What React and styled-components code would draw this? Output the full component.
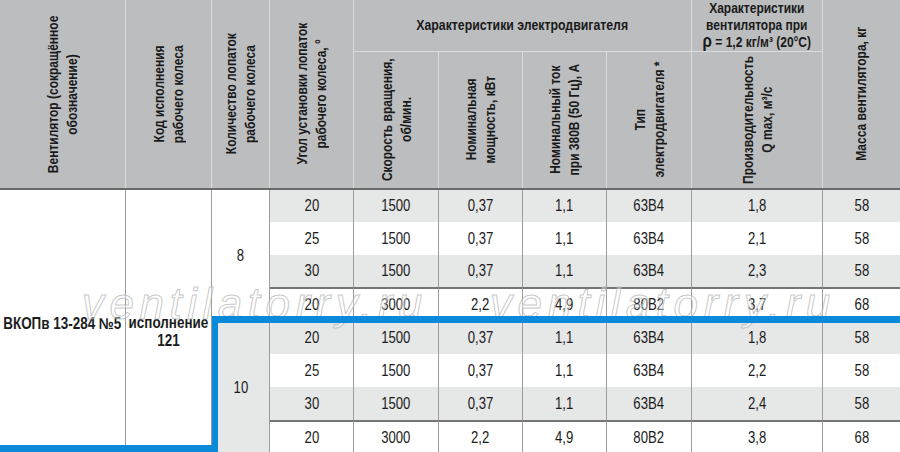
import React from "react";
import styled, { createGlobalStyle } from "styled-components";

const Global = createGlobalStyle`
  html, body { margin: 0; padding: 0; background: #fff; overflow: hidden; }
  body { font-family: "Liberation Sans", Arial, sans-serif; color: #1c1c1c; }
`;

const COLS = "126px 86px 58px 84px 85px 84px 84px 85px 131px 77px";

const Page = styled.div`
  position: relative;
  width: 900px;
  height: 452px;
  overflow: hidden;
`;

const Head = styled.div`
  display: grid;
  grid-template-columns: ${COLS};
  grid-template-rows: 52px 136px;
  background: #bcbdbf;
  border-bottom: 2px solid #6a6a6a;
  font-weight: 700;
  font-size: 15px;
  color: #1a1a1a;
`;

const HCell = styled.div`
  grid-column: ${(p) => p.$col};
  grid-row: ${(p) => p.$row};
  display: flex;
  flex-direction: column;
  align-items: center;
  justify-content: center;
  border-right: ${(p) => (p.$last ? "none" : "1px solid #dcdcdc")};
  border-bottom: ${(p) => (p.$group ? "1px solid #dcdcdc" : "none")};
  box-sizing: border-box;
  text-align: center;
  line-height: 16.5px;
`;

const Narrow = styled.span`
  display: inline-block;
  white-space: nowrap;
  transform: scaleX(${(p) => p.$k || 0.82});
  text-align: center;
`;

const Vert = styled.div`
  writing-mode: vertical-rl;
  transform: rotate(180deg) scaleY(0.8);
  text-align: center;
  line-height: 18.5px;
  white-space: nowrap;
`;

const Rho = styled.span`
  font-size: 19px;
`;

const Body = styled.div`
  display: grid;
  grid-template-columns: ${COLS};
  grid-template-rows: 32px 33px 32px 34px 33px 33px 33px 34px;
`;

const Cell = styled.div`
  grid-column: ${(p) => p.$col};
  grid-row: ${(p) => p.$row};
  box-sizing: border-box;
  display: flex;
  align-items: center;
  justify-content: center;
  font-size: 16px;
  background: ${(p) => (p.$shade ? "#e6e7e7" : "#fff")};
  border-right: ${(p) => (p.$last ? "none" : "1px solid #9c9c9c")};
  border-top: ${(p) => (p.$thick ? "2px solid #747474" : "none")};
`;

const NameCell = styled.div`
  grid-column: ${(p) => p.$col};
  grid-row: 1 / 9;
  box-sizing: border-box;
  border-right: 1px solid #9c9c9c;
  background: #fff;
  padding-top: ${(p) => p.$pt}px;
  display: flex;
  flex-direction: column;
  align-items: center;
  font-weight: 700;
  font-size: 16px;
  line-height: 18px;
`;

const Overlay = styled.div`
  position: absolute;
  inset: 0;
  pointer-events: none;
`;

const BlueLine = styled.div`
  position: absolute;
  background: #0a8ad8;
`;

const Watermark = styled.div`
  position: absolute;
  font-family: "Liberation Sans", sans-serif;
  font-style: italic;
  font-size: 44px;
  line-height: 1;
  letter-spacing: 5.5px;
  color: rgba(255, 255, 255, 0.4);
  -webkit-text-stroke: 1px rgba(170, 170, 170, 0.65);
  white-space: nowrap;
`;

const rows = [
  ["20", "1500", "0,37", "1,1", "63В4", "1,8", "58"],
  ["25", "1500", "0,37", "1,1", "63В4", "2,1", "58"],
  ["30", "1500", "0,37", "1,1", "63В4", "2,3", "58"],
  ["20", "3000", "2,2", "4,9", "80В2", "3,7", "68"],
  ["20", "1500", "0,37", "1,1", "63В4", "1,8", "58"],
  ["25", "1500", "0,37", "1,1", "63В4", "2,2", "58"],
  ["30", "1500", "0,37", "1,1", "63В4", "2,4", "58"],
  ["20", "3000", "2,2", "4,9", "80В2", "3,8", "68"],
];

export default function App() {
  return (
    <Page>
      <Global />
      <Head>
        <HCell $col="1" $row="1 / 3">
          <Vert>
            Вентилятор (сокращённое
            <br />
            обозначение)
          </Vert>
        </HCell>
        <HCell $col="2" $row="1 / 3">
          <Vert>
            Код исполнения
            <br />
            рабочего колеса
          </Vert>
        </HCell>
        <HCell $col="3" $row="1 / 3">
          <Vert>
            Количество лопаток
            <br />
            рабочего колеса
          </Vert>
        </HCell>
        <HCell $col="4" $row="1 / 3">
          <Vert>
            Угол установки лопаток
            <br />
            рабочего колеса, °
          </Vert>
        </HCell>
        <HCell $col="5 / 9" $row="1" $group>
          <Narrow>Характеристики электродвигателя</Narrow>
        </HCell>
        <HCell $col="9" $row="1" $group>
          <Narrow $k={0.8}>
            Характеристики
            <br />
            вентилятора при
            <br />
            <Rho>ρ</Rho> = 1,2 кг/м³ (20°C)
          </Narrow>
        </HCell>
        <HCell $col="10" $row="1 / 3" $last>
          <Vert>Масса вентилятора, кг</Vert>
        </HCell>
        <HCell $col="5" $row="2">
          <Vert>
            Скорость вращения,
            <br />
            об/мин.
          </Vert>
        </HCell>
        <HCell $col="6" $row="2">
          <Vert>
            Номинальная
            <br />
            мощность, кВт
          </Vert>
        </HCell>
        <HCell $col="7" $row="2">
          <Vert>
            Номинальный ток
            <br />
            при 380В (50 Гц), А
          </Vert>
        </HCell>
        <HCell $col="8" $row="2">
          <Vert>
            Тип
            <br />
            электродвигателя *
          </Vert>
        </HCell>
        <HCell $col="9" $row="2">
          <Vert>
            Производительность
            <br />
            Q max, м³/с
          </Vert>
        </HCell>
      </Head>
      <Body>
        <NameCell $col="1" $pt={125}>
          <Narrow $k={0.84}>ВКОПв 13-284 №5</Narrow>
        </NameCell>
        <NameCell $col="2" $pt={124}>
          <Narrow $k={0.84}>
            исполнение
            <br />
            121
          </Narrow>
        </NameCell>
        <Cell $col="3" $row="1 / 5">
          <Narrow>8</Narrow>
        </Cell>
        <Cell $col="3" $row="5 / 9" $shade>
          <Narrow>10</Narrow>
        </Cell>
        {rows.map((r, i) =>
          r.map((v, j) => (
            <Cell
              key={`${i}-${j}`}
              $col={String(4 + j)}
              $row={String(i + 1)}
              $shade={i % 2 === 0}
              $thick={i === 3 || i === 7}
              $last={j === 6}
            >
              <Narrow>{v}</Narrow>
            </Cell>
          ))
        )}
      </Body>
      <Overlay>
        <Watermark style={{ left: 82, top: 282 }}>ventilatorry.ru</Watermark>
        <Watermark style={{ left: 490, top: 282 }}>ventilatorry.ru</Watermark>
        <BlueLine style={{ left: 212, top: 316, width: 688, height: 7 }} />
        <BlueLine style={{ left: 212, top: 316, width: 6, height: 140 }} />
        <BlueLine style={{ left: 0, top: 445, width: 218, height: 10 }} />
      </Overlay>
    </Page>
  );
}
